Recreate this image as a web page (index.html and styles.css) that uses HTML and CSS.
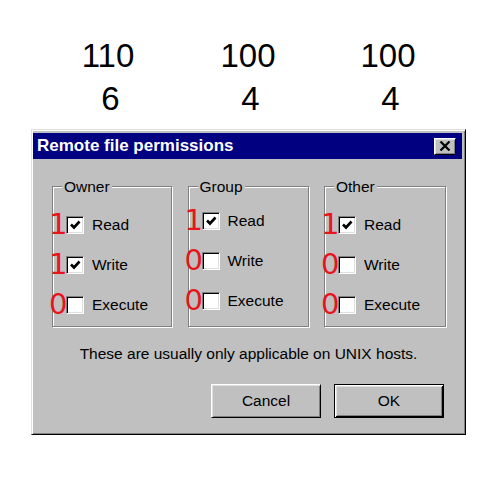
FILE: index.html
```html
<!DOCTYPE html>
<html>
<head>
<meta charset="utf-8">
<link rel="stylesheet" href="styles.css">
</head>
<body>
<div class="numbers">
  <div>110</div><div>100</div><div>100</div>
  <div class="n2">6</div><div class="n2">4</div><div class="n2">4</div>
</div>
<div class="dialog">
  <div class="titlebar">
    <span class="title">Remote file permissions</span>
    <span class="close"><svg width="12" height="10" viewBox="0 0 12 10"><path d="M1.5 0.5 L10.5 9.5 M10.5 0.5 L1.5 9.5" stroke="#000" stroke-width="2.2"/></svg></span>
  </div>
  <div class="groups">
    <div class="group">
      <span class="legend">Owner</span>
      <div class="rows">
        <div class="row"><span class="bit">1</span><span class="cb"><svg width="14" height="14" viewBox="0 0 14 14"><path d="M3 6.5 L6 9.5 L11.5 3.5" fill="none" stroke="#000" stroke-width="2.6"/></svg></span><span class="lbl">Read</span></div>
        <div class="row"><span class="bit">1</span><span class="cb"><svg width="14" height="14" viewBox="0 0 14 14"><path d="M3 6.5 L6 9.5 L11.5 3.5" fill="none" stroke="#000" stroke-width="2.6"/></svg></span><span class="lbl">Write</span></div>
        <div class="row"><span class="bit">0</span><span class="cb"></span><span class="lbl">Execute</span></div>
      </div>
    </div>
    <div class="group up">
      <span class="legend">Group</span>
      <div class="rows">
        <div class="row"><span class="bit">1</span><span class="cb"><svg width="14" height="14" viewBox="0 0 14 14"><path d="M3 6.5 L6 9.5 L11.5 3.5" fill="none" stroke="#000" stroke-width="2.6"/></svg></span><span class="lbl">Read</span></div>
        <div class="row"><span class="bit">0</span><span class="cb"></span><span class="lbl">Write</span></div>
        <div class="row"><span class="bit">0</span><span class="cb"></span><span class="lbl">Execute</span></div>
      </div>
    </div>
    <div class="group">
      <span class="legend">Other</span>
      <div class="rows">
        <div class="row"><span class="bit">1</span><span class="cb"><svg width="14" height="14" viewBox="0 0 14 14"><path d="M3 6.5 L6 9.5 L11.5 3.5" fill="none" stroke="#000" stroke-width="2.6"/></svg></span><span class="lbl">Read</span></div>
        <div class="row"><span class="bit">0</span><span class="cb"></span><span class="lbl">Write</span></div>
        <div class="row"><span class="bit">0</span><span class="cb"></span><span class="lbl">Execute</span></div>
      </div>
    </div>
  </div>
  <p class="note">These are usually only applicable on UNIX hosts.</p>
  <div class="buttons">
    <button class="btn">Cancel</button>
    <button class="btn default">OK</button>
  </div>
</div>
</body>
</html>
```

FILE: styles.css
```css
html, body {
  margin: 0;
  padding: 0;
  background: #fff;
}
body {
  width: 500px;
  height: 482px;
  overflow: hidden;
  font-family: "Liberation Sans", Arial, sans-serif;
}
.numbers {
  display: grid;
  grid-template-columns: repeat(3, 140px);
  margin-left: 38px;
  padding-top: 34px;
  font-size: 33px;
  line-height: 43px;
  text-align: center;
  color: #000;
}
.numbers .n2 {
  padding-left: 5px;
}
.dialog {
  margin: 9px 0 0 31px;
  width: 435px;
  height: 306px;
  box-sizing: border-box;
  background: #c0c0c0;
  border: 1px solid;
  border-color: #dfdfdf #000 #000 #dfdfdf;
  box-shadow: inset 1px 1px #fff, inset -1px -1px #808080;
  padding: 3px 1px 0 1px;
  display: flex;
  flex-direction: column;
}
.titlebar {
  height: 26px;
  background: #000080;
  color: #fff;
  display: flex;
  align-items: center;
  justify-content: space-between;
  padding: 0 6px 0 4px;
  margin-right: 2px;
}
.title {
  font-weight: bold;
  font-size: 17px;
}
.close {
  width: 22px;
  height: 17px;
  box-sizing: border-box;
  background: #c0c0c0;
  border: 1px solid;
  border-color: #fff #000 #000 #fff;
  box-shadow: inset 1px 1px #dfdfdf, inset -1px -1px #808080;
  display: flex;
  align-items: center;
  justify-content: center;
}
.groups {
  margin: 27px 0 0 19px;
  width: 394px;
  display: grid;
  grid-template-columns: 120px 121px 122px;
  column-gap: 15.5px;
}
.group {
  height: 141px;
  box-sizing: border-box;
  border: 1px solid #808080;
  box-shadow: inset 1px 1px #fff, 1px 1px #fff;
  display: flex;
  flex-direction: column;
}
.legend {
  align-self: flex-start;
  margin: -9px 0 0 9px;
  padding: 0 2px;
  background: #c0c0c0;
  font-size: 15.5px;
  line-height: 17px;
  color: #000;
}
.rows {
  margin-top: 10px;
  display: flex;
  flex-direction: column;
  gap: 1px;
}
.group.up .rows {
  margin-top: 6px;
}
.row {
  position: relative;
  height: 39px;
  display: flex;
  align-items: center;
  padding-left: 13px;
}
.cb {
  width: 18px;
  height: 18px;
  box-sizing: border-box;
  background: #fff;
  border: 1px solid;
  border-color: #808080 #fff #fff #808080;
  box-shadow: inset 1px 1px #000, inset -1px -1px #dfdfdf;
  display: flex;
  align-items: center;
  justify-content: center;
}
.lbl {
  margin-left: 8px;
  font-size: 15.5px;
  color: #000;
}
.bit {
  position: absolute;
  left: -4px;
  top: 5px;
  font-family: "DejaVu Sans", sans-serif;
  font-size: 29px;
  line-height: 1;
  color: #e8141c;
}
.note {
  margin: 18px 0 0 0;
  text-align: center;
  font-size: 15.5px;
  line-height: 18px;
  color: #000;
}
.buttons {
  margin-top: 21px;
  display: flex;
  justify-content: flex-end;
  gap: 13px;
  padding-right: 20px;
}
.btn {
  width: 110px;
  height: 34px;
  box-sizing: border-box;
  padding: 0;
  background: #c0c0c0;
  border: 1px solid;
  border-color: #fff #000 #000 #fff;
  box-shadow: inset 1px 1px #dfdfdf, inset -1px -1px #808080;
  font-family: "Liberation Sans", Arial, sans-serif;
  font-size: 15.5px;
  color: #000;
}
.btn.default {
  border-color: #000;
  box-shadow: inset 1px 1px #fff, inset -1px -1px #000, inset 2px 2px #dfdfdf, inset -2px -2px #808080;
}
```
